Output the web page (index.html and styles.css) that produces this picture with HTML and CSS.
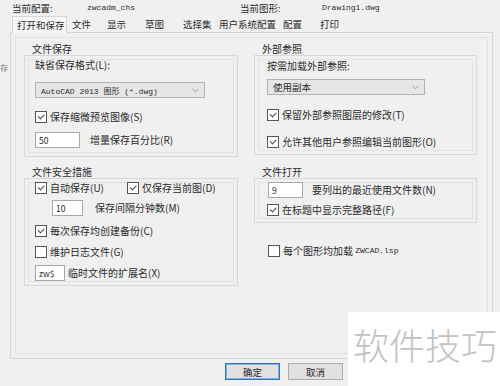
FILE: index.html
```html
<!doctype html>
<html>
	<head>
		<title>选项 - 打开和保存</title>
		<meta charset="utf-8"/>
		<link rel="stylesheet" href="styles.css">
	</head>
	<body>

		<div class="dialog">

			<div class="current">
				<span>当前配置:</span><span class="mono">zwcadm_chs</span>
				<span>当前图形:</span><span class="mono">Drawing1.dwg</span>
			</div>

			<div class="tabs">
				<span class="tab active">打开和保存</span>
				<span class="tab">文件</span>
				<span class="tab">显示</span>
				<span class="tab">草图</span>
				<span class="tab">选择集</span>
				<span class="tab">用户系统配置</span>
				<span class="tab">配置</span>
				<span class="tab">打印</span>
			</div>

			<div class="panel">

				<section class="group">
					<div class="group-title">文件保存</div>
					<div class="group-box save">
						<div class="field-label">缺省保存格式(L):</div>
						<div class="select wide"><span class="mono">AutoCAD 2013 图形 (*.dwg)</span><svg width="7" height="5" viewBox="0 0 7 5"><polyline points="0.5,0.8 3.5,3.8 6.5,0.8" fill="none" stroke="#9a9a9a" stroke-width="1"/></svg></div>
						<label class="check"><span class="box on"></span>保存缩微预览图像(S)</label>
						<div class="row"><span class="input w45">50</span>增量保存百分比(R)</div>
					</div>
				</section>

				<section class="group">
					<div class="group-title">外部参照</div>
					<div class="group-box xref">
						<div class="field-label">按需加载外部参照:</div>
						<div class="select narrow"><span>使用副本</span><svg width="7" height="5" viewBox="0 0 7 5"><polyline points="0.5,0.8 3.5,3.8 6.5,0.8" fill="none" stroke="#9a9a9a" stroke-width="1"/></svg></div>
						<label class="check first"><span class="box on"></span>保留外部参照图层的修改(T)</label>
						<label class="check second"><span class="box on"></span>允许其他用户参照编辑当前图形(O)</label>
					</div>
				</section>

				<section class="group">
					<div class="group-title">文件安全措施</div>
					<div class="group-box safety">
						<div class="pair">
							<label class="check"><span class="box on"></span>自动保存(U)</label>
							<label class="check"><span class="box on"></span>仅保存当前图(D)</label>
						</div>
						<div class="row interval"><span class="input w31">10</span>保存间隔分钟数(M)</div>
						<label class="check"><span class="box on"></span>每次保存均创建备份(C)</label>
						<label class="check"><span class="box"></span>维护日志文件(G)</label>
						<div class="row ext"><span class="input w30">zw$</span>临时文件的扩展名(X)</div>
					</div>
				</section>

				<div class="group">
					<section>
						<div class="group-title">文件打开</div>
						<div class="group-box open">
							<div class="row recent"><span class="input w35">9</span>要列出的最近使用文件数(N)</div>
							<label class="check"><span class="box on"></span>在标题中显示完整路径(F)</label>
						</div>
					</section>
					<label class="check lsp"><span class="box"></span>每个图形均加载&nbsp;<span class="mono">ZWCAD.lsp</span></label>
				</div>

			</div>

			<div class="buttons">
				<button class="default">确定</button>
				<button>取消</button>
			</div>

		</div>

		<span class="edge">存</span>
		<div class="watermark">软件技巧</div>

	</body>
</html>
```

FILE: styles.css
```css
body {
	margin: 0;
	background: #f0f0f0;
	color: #2b2b2b;
	font-family: "Noto Sans CJK SC", sans-serif;
	font-size: 10px;
	overflow: hidden;
}

.mono {
	font-family: "Liberation Mono", "Noto Sans CJK SC", monospace;
	font-size: 8px;
}

/* header: current profile / drawing */
.current {
	display: grid;
	grid-template-columns: 75px 153px 82px auto;
	align-items: center;
	padding: 2px 0 0 12px;
	height: 12px;
	line-height: 12px;
	font-size: 9.5px;
}

/* tab strip */
.tabs {
	display: grid;
	grid-template-columns: 55px 35px 38px 38px 36px 64px 37px 30px;
	margin: 2px 0 0 12px;
	height: 17px;
	font-size: 9.5px;
	line-height: 17px;
}
.tab {
	padding-left: 5px;
	white-space: nowrap;
}
.tab.active {
	position: relative;
	z-index: 1;
	padding-left: 4px;
	background: #f7f7f7;
	border: 1px solid #d6d6d6;
	border-bottom: none;
	line-height: 16px;
}

/* tab page */
.panel {
	box-sizing: border-box;
	width: 483px;
	height: 327px;
	margin: -1px 0 0 10px;
	padding: 10px 0 0 13px;
	border: 1px solid #d6d6d6;
	box-shadow: inset 0 0 0 4px #f0f0f0, inset 0 0 0 5px #e2e2e2;
	display: grid;
	grid-template-columns: 214px 223px;
	grid-template-rows: auto auto;
	align-items: start;
	align-content: start;
	column-gap: 16px;
	row-gap: 9px;
}

.group-title {
	height: 12px;
	line-height: 12px;
	padding-left: 8px;
}

.group-box {
	display: flex;
	flex-direction: column;
	align-items: flex-start;
	border: 1px solid #d8d8d8;
	box-shadow: inset 0 0 0 3px #f0f0f0, inset 0 0 0 4px #e3e3e3;
	padding: 0 10px;
}

.field-label,
.check,
.row {
	line-height: 12px;
	white-space: nowrap;
}

.check {
	display: flex;
	align-items: center;
	height: 12px;
}
.box {
	position: relative;
	box-sizing: border-box;
	width: 12px;
	height: 12px;
	margin-right: 3px;
	background: #fff;
	border: 1px solid #555;
	flex: none;
}
.box.on::after {
	content: "";
	position: absolute;
	left: 2px;
	top: 1.5px;
	width: 5px;
	height: 2.5px;
	border-left: 1.3px solid #444;
	border-bottom: 1.3px solid #444;
	transform: rotate(-45deg);
}

.select {
	box-sizing: border-box;
	display: flex;
	justify-content: space-between;
	align-items: center;
	height: 16px;
	padding: 0 5px 0 5px;
	background: #e6e6e6;
	border: 1px solid #b4b4b4;
	font-size: 9.5px;
}
.select.wide { width: 170px; }
.select.narrow { width: 158px; }

.row {
	display: flex;
	align-items: center;
	gap: 10px;
}
.input {
	box-sizing: border-box;
	height: 16px;
	padding-left: 3px;
	background: #fff;
	border: 1px solid #a8a8a8;
	font-size: 8.5px;
	line-height: 14px;
}
.w45 { width: 45px; }
.w31 { width: 31px; }
.w30 { width: 30px; }
.w35 { width: 35px; }

/* 文件保存 */
.save { padding-top: 3px; padding-bottom: 8px; }
.save .select { margin-top: 11px; }
.save .check { margin-top: 13px; }
.save .row { margin-top: 9px; }

/* 外部参照 */
.xref { padding-left: 12px; padding-top: 4px; padding-bottom: 6px; }
.xref .select { margin-top: 7px; }
.xref .check.first { margin-top: 14px; }
.xref .check.second { margin-top: 15px; }

/* 文件安全措施 */
.safety { padding-top: 3px; padding-bottom: 4px; }
.pair {
	display: grid;
	grid-template-columns: 92px auto;
}
.safety .interval { margin-top: 6px; padding-left: 17px; gap: 12px; }
.safety > .check { margin-top: 9px; }
.safety .ext { margin-top: 7px; gap: 3px; }

/* 文件打开 */
.open { padding-left: 12px; padding-top: 3px; padding-bottom: 6px; }
.open .recent { margin-left: 1px; gap: 9px; }
.open .check { margin-top: 6px; }

.lsp {
	margin: 22px 0 0 14px;
}

/* dialog buttons */
.buttons {
	display: flex;
	gap: 8px;
	margin-top: 4px;
	padding-left: 225px;
}
.buttons button {
	box-sizing: border-box;
	width: 55px;
	height: 17px;
	padding: 0;
	background: #e1e1e1;
	border: 1px solid #adadad;
	font-family: inherit;
	font-size: 9.5px;
	color: #2b2b2b;
	line-height: 14px;
}
.buttons button.default {
	border-color: #2f74bf;
	box-shadow: inset 0 0 0 1px #7fb1e2;
}

/* overlays from the screenshot source */
.edge {
	position: absolute;
	left: 0;
	top: 62px;
	font-size: 8px;
	color: #777;
}
.watermark {
	position: absolute;
	left: 348px;
	top: 312px;
	box-sizing: border-box;
	width: 152px;
	height: 74px;
	padding: 14px 0 0 5px;
	background: #fff;
	color: #c2c2c2;
	font-size: 36px;
	font-weight: 300;
	line-height: 36px;
	white-space: nowrap;
}
```
